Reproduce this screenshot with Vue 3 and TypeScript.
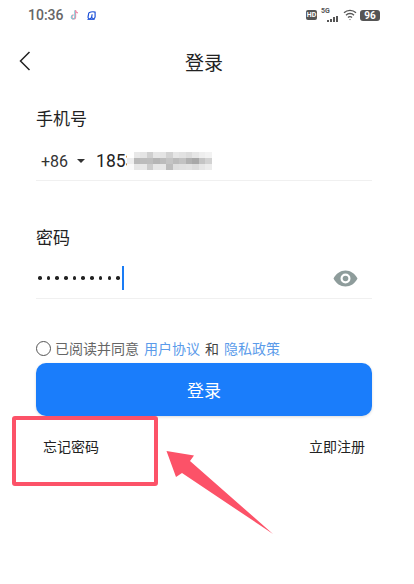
<script setup lang="ts">
const mosaicRows: string[][] = [
  ['#fff', '#e8e8e8', '#e4e4e4', '#cfcfcf', '#e6e6e6', '#e4e4e4', '#d2d2d2', '#e6e6e6', '#e2e2e2', '#dcdcdc', '#e6e6e6', '#eeeeee', '#f2f2f2'],
  ['#eeeeee', '#b9b9b9', '#bcbcbc', '#bdbdbd', '#b5b5b5', '#bcbcbc', '#c4c4c4', '#bbbbbb', '#c2c2c2', '#b0b0b0', '#a8a8a8', '#c4c4c4', '#d2d2d2'],
  ['#fafafa', '#e6e6e6', '#e8e8e8', '#cccccc', '#e6e6e6', '#e8e8e8', '#bdbdbd', '#dedede', '#e0e0e0', '#e2e2e2', '#dcdcdc', '#e6e6e6', '#ececec']
]
const signalBars = [2, 3, 5, 6]
</script>

<template>
  <div class="page">
    <div class="status">
      <div class="status-left">
        <span class="time">10:36</span>
        <svg class="app-icon" width="10" height="12" viewBox="0 0 11 13" fill="none">
          <path d="M6 1v7.600a2 2 0 1 1-2-2" stroke="#f48aa8" stroke-width="1.600" />
          <path d="M5.300 1.500v7.400a2 2 0 1 1-2-2" stroke="#6fd3dc" stroke-width="1.100" />
          <path d="M6 1.600c.3 1.500 1.300 2.400 2.800 2.600" stroke="#f48aa8" stroke-width="1.200" />
        </svg>
        <svg class="app-icon second" width="9" height="9" viewBox="0 0 10 10" fill="none">
          <path d="M2 2 1.200 6.500C1 8 2 8.600 3 8.600s2-.6 2.200-2l.5-3M5.300 6.500c0 1.400.7 2.100 1.700 2.100S8.800 8 9 6.500V1.200C7 .6 4.500.8 2 2" stroke="#1a4fd8" stroke-width="1.300" />
          <path d="M0.500 9.500h8" stroke="#1a4fd8" stroke-width="1" />
        </svg>
      </div>
      <div class="status-right">
        <span class="hd">HD</span>
        <div class="signal">
          <span class="five-g">5G</span>
          <div class="bars">
            <i v-for="h in signalBars" :key="h" :style="{ height: h + 'px' }"></i>
          </div>
        </div>
        <svg width="14" height="12" viewBox="0 0 14 12" fill="none" stroke="#555" stroke-width="1.300">
          <path d="M1 3.800a8.500 8.500 0 0 1 12 0" />
          <path d="M3 6.200a5.600 5.600 0 0 1 8 0" />
          <path d="M5 8.500a2.800 2.800 0 0 1 4 0" />
          <path d="M6.200 10.400 7 11.200l.8-.8a1.100 1.100 0 0 0-1.600 0z" fill="#555" stroke="none" />
        </svg>
        <span class="battery">96</span>
      </div>
    </div>

    <header class="nav">
      <svg class="back" width="14" height="22" viewBox="0 0 14 22" fill="none">
        <path d="M11.500 2 2.500 11l9 9" stroke="#222" stroke-width="1.500" />
      </svg>
      <h1>登录</h1>
    </header>

    <main class="form">
      <label class="field-label">手机号</label>
      <div class="input-row phone">
        <span class="code">+86</span>
        <span class="caret-down"></span>
        <span class="number">1853</span>
        <div class="mosaic">
          <div v-for="(row, r) in mosaicRows" :key="r" class="mosaic-row">
            <i v-for="(c, i) in row" :key="i" :style="{ background: c }"></i>
          </div>
        </div>
      </div>

      <label class="field-label pwd-label">密码</label>
      <div class="input-row password">
        <div class="dots">
          <i v-for="n in 10" :key="n"></i>
        </div>
        <span class="cursor"></span>
        <svg class="eye" width="25" height="17" viewBox="0 0 25 17">
          <path fill-rule="evenodd" fill="#8e9c9b" d="M.5 8.500C3 3.500 7.500.5 12.500.5s9.500 3 12 8c-2.500 5-7 8-12 8s-9.500-3-12-8zm12 5a5 5 0 1 0 0-10 5 5 0 0 0 0 10z" />
          <circle cx="12.500" cy="8.500" r="2.800" fill="#8e9c9b" />
        </svg>
      </div>

      <div class="agree">
        <span class="radio"></span>
        <span>已阅读并同意</span>
        <a>用户协议</a>
        <span class="and">和</span>
        <a>隐私政策</a>
      </div>

      <button class="submit" type="button">登录</button>

      <div class="links">
        <span>忘记密码</span>
        <span>立即注册</span>
      </div>
    </main>

    <div class="mark"></div>
    <svg class="arrow" width="120" height="95" viewBox="160 445 120 95">
      <path fill="#fc5268" d="M166.500 451 194 455.500 190 461 273 534 182 473 176 477z" />
    </svg>
  </div>
</template>

<style>
html, body {
  margin: 0;
  background: #fff;
}
</style>

<style scoped>
.page {
  position: relative;
  width: 414px;
  height: 584px;
  overflow: hidden;
  background: #fff;
  font-family: "Noto Sans CJK SC", "Noto Sans", sans-serif;
  color: #222;
}

.status {
  height: 30px;
  padding: 0 34px 0 28px;
  display: flex;
  align-items: center;
  justify-content: space-between;
}

.status-left {
  display: flex;
  align-items: center;
}

.time {
  font-family: Roboto, sans-serif;
  font-size: 14px;
  font-weight: 500;
  color: #666;
}

.app-icon {
  margin-left: 6px;
}

.app-icon.second {
  margin-left: 7px;
}

.status-right {
  display: flex;
  align-items: center;
  gap: 5px;
}

.hd {
  width: 11px;
  height: 10px;
  border-radius: 2px;
  background: #555;
  color: #fff;
  font: 700 7px/10px Roboto, sans-serif;
  text-align: center;
}

.signal {
  position: relative;
  width: 17px;
  height: 13px;
  margin-left: -1px;
}

.five-g {
  position: absolute;
  left: 0;
  top: -2px;
  font: 700 7px/9px Roboto, sans-serif;
  color: #555;
}

.bars {
  position: absolute;
  right: 0;
  bottom: 0;
  display: flex;
  align-items: flex-end;
  gap: 1px;
}

.bars i {
  display: block;
  width: 2px;
  background: #555;
}

.battery {
  width: 20px;
  height: 11px;
  margin-left: -2px;
  border-radius: 3px;
  background: #555;
  color: #fff;
  font: 700 10px/11px Roboto, sans-serif;
  text-align: center;
}

.nav {
  position: relative;
  height: 48px;
  margin-top: 7px;
  display: flex;
  align-items: center;
  justify-content: center;
  padding-right: 6px;
}

.nav h1 {
  margin: 0;
  font-size: 19px;
  font-weight: 400;
  color: #222;
}

.back {
  position: absolute;
  left: 18px;
  top: 13px;
}

.form {
  margin: 0 42px 0 36px;
  padding-top: 21px;
}

.field-label {
  display: block;
  font-size: 17px;
  line-height: 24px;
  color: #222;
}

.input-row {
  display: flex;
  align-items: center;
  border-bottom: 1px solid #f0f0f0;
}

.phone {
  height: 38px;
  margin-top: 12px;
  padding-left: 5px;
  font-family: Roboto, sans-serif;
  color: #333;
}

.code {
  font-size: 16px;
}

.caret-down {
  width: 0;
  height: 0;
  margin: 0 11px 0 9px;
  border-left: 4px solid transparent;
  border-right: 4px solid transparent;
  border-top: 4px solid #333;
}

.number {
  font-size: 17.500px;
  color: #222;
}

.mosaic {
  margin-left: -8px;
}

.mosaic-row {
  display: flex;
}

.mosaic-row i {
  display: block;
  width: 6.500px;
  height: 6px;
}

.pwd-label {
  margin-top: 44px;
}

.password {
  position: relative;
  height: 40px;
  margin-top: 9px;
  padding-left: 2px;
}

.dots {
  display: flex;
  gap: 5.200px;
}

.dots i {
  display: block;
  width: 3.500px;
  height: 3.500px;
  border-radius: 50%;
  background: #222;
}

.cursor {
  width: 2px;
  height: 24px;
  margin-left: 2px;
  background: #1a7cf5;
}

.eye {
  margin-left: auto;
  margin-right: 14px;
}

.agree {
  display: flex;
  align-items: center;
  height: 22px;
  margin-top: 38px;
  font-size: 14px;
  color: #666;
}

.radio {
  box-sizing: border-box;
  width: 15px;
  height: 15px;
  margin-right: 4px;
  border: 1px solid #555;
  border-radius: 50%;
}

.agree a {
  margin-left: 5px;
  color: #5b9bea;
}

.and {
  margin-left: 5px;
  color: #444;
}

.submit {
  display: block;
  width: 100%;
  height: 53px;
  margin-top: 4px;
  border: 0;
  border-radius: 10px;
  background: #1a7dfb;
  color: #fff;
  font-family: inherit;
  font-size: 17px;
  box-shadow: 0 1px 3px rgba(0, 0, 0, 0.15);
}

.links {
  display: flex;
  justify-content: space-between;
  padding: 20px 7px 0;
  font-size: 14px;
  line-height: 20px;
  color: #222;
}

.mark {
  position: absolute;
  left: 12px;
  top: 416px;
  box-sizing: border-box;
  width: 146px;
  height: 70px;
  border: 4px solid #fc5268;
  border-radius: 3px;
}

.arrow {
  position: absolute;
  left: 160px;
  top: 445px;
}
</style>
